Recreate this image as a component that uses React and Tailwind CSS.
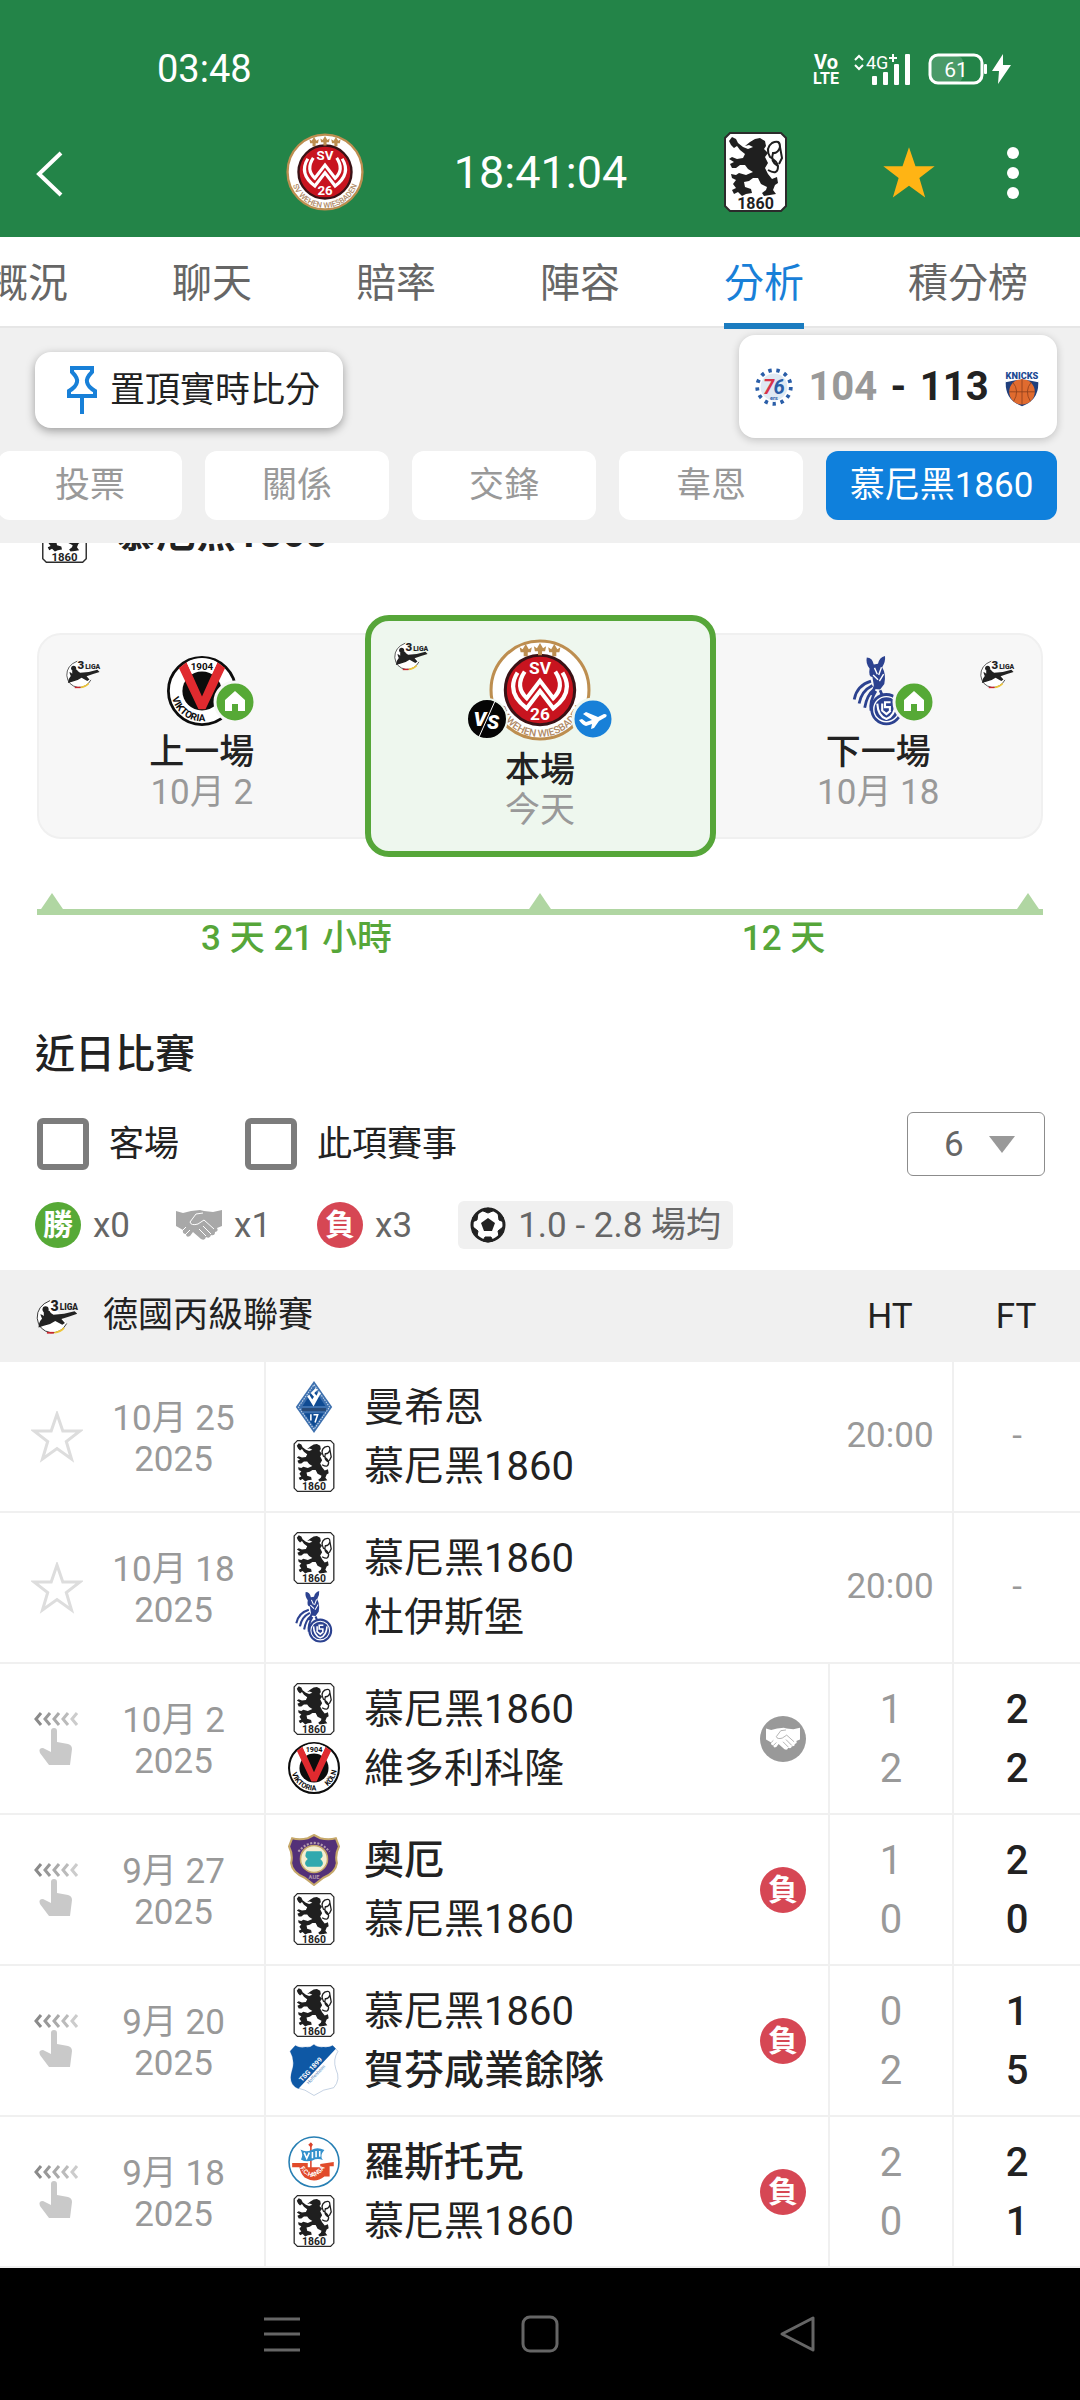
import React, { useId, useState } from 'react';

const LogoWehen = ({ className }) => {
  const arc = useId();
  return (
    <svg viewBox="0 0 100 100" className={className} role="img" aria-label="SV Wehen Wiesbaden">
      <circle cx="50" cy="50" r="48" fill="#fff" stroke="#bd8e50" strokeWidth="3" />
      <circle cx="50" cy="50" r="34" fill="#c8141f" stroke="#3a1216" strokeWidth="3" />
      <path d="M28 33Q16 52 37 68L50 51L63 68Q84 52 72 33" fill="none" stroke="#fff" strokeWidth="4" />
      <path d="M35 32Q25 47 37 58L50 41L63 58Q75 47 65 32" fill="none" stroke="#fff" strokeWidth="4" />
      <text x="50" y="34" textAnchor="middle" fontSize="17" fontWeight="700" fill="#fff">SV</text>
      <text x="50" y="79" textAnchor="middle" fontSize="17" fontWeight="700" fill="#fff">26</text>
      <g fill="#bd8e50">
        <path d="M50 4L53 9L56 7L55 12L52 12V16H48V12L45 12L44 7L47 9Z" />
        <path d="M36 5L39 10L42 8L41 13L38 13V17H34V13L31 13L30 8L33 10Z" />
        <path d="M64 5L67 10L70 8L69 13L66 13V17H62V13L59 13L58 8L61 10Z" />
      </g>
      <path id={arc} d="M6 52A44 44 0 0 0 94 52" fill="none" />
      <text fontSize="10" fontWeight="500" fill="#b08a66">
        <textPath href={`#${arc}`} startOffset="50%" textAnchor="middle">SV WEHEN WIESBADEN</textPath>
      </text>
    </svg>
  );
};

const Logo1860 = ({ className }) => (
  <svg viewBox="0 0 63 80" className={className} role="img" aria-label="TSV 1860">
    <path d="M6 1H57L62 6V74L57 79H6L1 74V6Z" fill="#fff" stroke="#2b2b2b" strokeWidth="2" />
    <path
      d="M26 10L31 7L36 6L41 9L42 14L40 17L44 21L41 25L44 31L41 36L44 42L48 47L53 45L54 51L51 53L49 58L52 62L46 63L40 64L38 61L42 58L43 55L37 52L34 46L29 46L25 49L20 50L21 55L27 57L28 61L22 62L18 64L14 60L10 62L8 58L12 56L9 52L12 48L8 46L7 42L12 43L15 41L22 43L29 40L24 37L21 33L16 33L12 36L8 36L6 32L10 30L5 27L8 25L13 27L19 26L21 22L16 18L13 14L10 16L7 13L5 9L8 5L12 7L14 11L19 15L24 17L29 15L25 13L21 14Z"
      fill="#1f1f1f"
    />
    <path d="M44 38Q54 44 54 34Q53 29 46 25Q41 16 48 11Q56 7 56 15Q54 22 48 21M54 34Q46 30 49 21M56 15L58 26L55 32" fill="none" stroke="#1f1f1f" strokeWidth="2" />
    <text x="31.500" y="77" textAnchor="middle" fontSize="16" fontWeight="700" fill="#1f1f1f">1860</text>
  </svg>
);

const LogoViktoria = ({ className }) => {
  const arc = useId();
  return (
    <svg viewBox="0 0 100 100" className={className} role="img" aria-label="Viktoria Köln">
      <circle cx="50" cy="50" r="48" fill="#fff" stroke="#0c0c0c" strokeWidth="4" />
      <circle cx="50" cy="50" r="28" fill="#0c0c0c" />
      <path d="M17 17L28 9L50 58L72 9L83 17L55 76H45Z" fill="#e02a2f" />
      <path d="M28 9Q50 -3 72 9L65 24Q50 18 35 24Z" fill="#fff" />
      <text x="50" y="20" textAnchor="middle" fontSize="14" fontWeight="700" fill="#0c0c0c">1904</text>
      <path id={arc} d="M7 40A44 44 0 1 0 93 40" fill="none" />
      <text fontSize="14" fontWeight="700" fill="#0c0c0c">
        <textPath href={`#${arc}`} startOffset="33%" textAnchor="middle">VIKTORIA</textPath>
      </text>
      <text fontSize="14" fontWeight="700" fill="#0c0c0c">
        <textPath href={`#${arc}`} startOffset="79%" textAnchor="middle">KÖLN</textPath>
      </text>
    </svg>
  );
};

const LogoDuisburg = ({ className }) => (
  <svg viewBox="0 0 72 100" className={className} role="img" aria-label="MSV Duisburg">
    <path d="M20 2Q28 2 30 12L36 11Q38 2 46 0Q47 8 42 16Q48 26 45 40L39 48L31 47L28 30Q22 30 24 18Q18 10 20 2Z" fill="#2c4290" />
    <path d="M31 17L35 26M41 16L37 27M29 27L36 34M44 26L38 36" stroke="#fff" strokeWidth="2" />
    <path d="M26 36Q6 42 2 62M28 42Q12 50 9 68M30 48Q20 56 17 74M33 50Q24 64 26 78M39 49L42 56M33 40L27 56" fill="none" stroke="#2c4290" strokeWidth="4" />
    <circle cx="48" cy="76" r="23" fill="#2c4290" />
    <circle cx="48" cy="76" r="18" fill="none" stroke="#fff" strokeWidth="2" />
    <path d="M35 68Q36 86 48 90Q60 86 61 68M42 68V78L48 83L54 78M54 66H46V73H53V78" fill="none" stroke="#fff" strokeWidth="3" />
  </svg>
);

const LogoMannheim = ({ className }) => (
  <svg viewBox="0 0 70 100" className={className} role="img" aria-label="Waldhof Mannheim">
    <path d="M35 0L70 50L35 100L0 50Z" fill="#3d70ae" />
    <path d="M35 7L65 50L35 93L5 50Z" fill="none" stroke="#c8d8ec" strokeWidth="2" strokeDasharray="3 2" />
    <path d="M35 15L57 48H13Z" fill="#0f4b93" />
    <path d="M12 52H58V58H12Z" fill="#274a78" />
    <path d="M24 28L34 44L46 22M40 15L32 23L38 30L33 38" fill="none" stroke="#fff" strokeWidth="5" />
    <path d="M16 62H54L35 88Z" fill="#0f4b93" />
    <path d="M29 64V76M34 65H42L37 80" fill="none" stroke="#fff" strokeWidth="3" />
  </svg>
);

const LogoAue = ({ className }) => (
  <svg viewBox="0 0 100 100" className={className} role="img" aria-label="Erzgebirge Aue">
    <path d="M50 2L62 8Q78 12 92 8L98 24Q90 40 94 56Q92 74 68 84L50 98L32 84Q8 74 6 56Q10 40 2 24L8 8Q22 12 38 8Z" fill="#533078" stroke="#c6a86a" strokeWidth="4" />
    <path d="M20 34Q50 0 80 34" fill="none" stroke="#b49cae" strokeWidth="4" strokeDasharray="4 3" />
    <circle cx="50" cy="48" r="26" fill="#f4eed0" stroke="#c6a86a" strokeWidth="3" />
    <path d="M36 33H64Q70 42 62 48Q72 56 63 63H37Q28 56 38 48Q30 42 36 33Z" fill="#31a9ae" />
    <text x="50" y="87" textAnchor="middle" fontSize="11" fontWeight="700" fill="#b49cae">AUE</text>
  </svg>
);

const LogoHoffenheim = ({ className }) => (
  <svg viewBox="0 0 96 100" className={className} role="img" aria-label="TSG Hoffenheim">
    <path d="M48 1Q54 7 66 6Q78 7 84 3L94 14Q84 30 90 48Q100 68 86 84Q66 86 48 99Q30 86 14 84Q-2 76 6 50Q12 32 2 14L12 3Q20 8 32 6Q42 7 48 1Z" fill="#fff" stroke="#8fa9c8" strokeWidth="1" />
    <path d="M48 1Q54 7 66 6Q78 7 84 3L90 9L18 86Q-3 78 6 50Q12 32 2 14L12 3Q20 8 32 6Q42 7 48 1Z" fill="#0e58a5" />
    <text transform="translate(25 73) rotate(-47)" fontSize="13" fontWeight="700" fill="#fff">TSG 1899</text>
    <text transform="translate(38 78) rotate(-47)" fontSize="9" fill="#4d7fb8">Hoffenheim</text>
  </svg>
);

const LogoRostock = ({ className }) => {
  const arc = useId();
  return (
    <svg viewBox="0 0 100 100" className={className} role="img" aria-label="Hansa Rostock">
      <circle cx="50" cy="50" r="48" fill="#fff" stroke="#277fb4" strokeWidth="3" />
      <path d="M44 14V62" stroke="#d9432c" strokeWidth="3" />
      <path d="M44 12L48 17L44 22L39 17Z" fill="#d9432c" />
      <path d="M24 26Q34 32 45 27Q56 20 70 27Q60 38 67 46Q56 42 47 47Q34 51 25 45Q30 36 24 26Z" fill="#3391cc" />
      <path d="M31 32L36 43L41 32M47 31V43M54 29V41M61 29V40" fill="none" stroke="#fff" strokeWidth="3" />
      <path d="M8 52H38V60H62V54L88 50V58H80V78H70Q52 92 32 80Q24 72 22 60H8Z" fill="#e14b2b" />
      <path id={arc} d="M24 63Q46 94 70 62" fill="none" />
      <text fontSize="12" fontWeight="700" fill="#fff">
        <textPath href={`#${arc}`} startOffset="50%" textAnchor="middle">F.C.HANSA</textPath>
      </text>
    </svg>
  );
};

const Logo76ers = ({ className }) => (
  <svg viewBox="0 0 100 100" className={className} role="img" aria-label="76ers">
    <circle cx="50" cy="50" r="49" fill="#fff" />
    <circle cx="50" cy="50" r="32" fill="#dfe9f3" />
    <circle cx="50" cy="50" r="40" fill="none" stroke="#2a5ea8" strokeWidth="9" strokeDasharray="8 11.300" />
    <text x="37" y="66" textAnchor="middle" fontSize="48" fontStyle="italic" fontWeight="700" fill="#d8344a">7</text>
    <text x="62" y="66" textAnchor="middle" fontSize="48" fontStyle="italic" fontWeight="700" fill="#2a5ea8">6</text>
    <text x="50" y="80" textAnchor="middle" fontSize="13" fontWeight="700" fill="#2a5ea8">ers</text>
  </svg>
);

const LogoKnicks = ({ className }) => (
  <svg viewBox="0 0 94 100" className={className} role="img" aria-label="Knicks">
    <path d="M8 24L86 24Q96 80 47 98Q-2 80 8 24Z" fill="#1f3f7c" />
    <circle cx="47" cy="62" r="32" fill="#e06b2f" />
    <path d="M47 30V94M15 62H79M24 38Q42 60 26 86M70 38Q52 60 68 86" fill="none" stroke="#8a3d1c" strokeWidth="2" />
    <path d="M1 8L47 14L93 8L88 38L47 30L6 38Z" fill="#fff" />
    <text x="47" y="31" textAnchor="middle" fontSize="23" fontWeight="900" fill="#1d4a93">KNICKS</text>
  </svg>
);

const LogoLiga = ({ className }) => (
  <svg viewBox="0 0 100 84" className={className} role="img" aria-label="3. Liga">
    <path d="M34 6Q4 18 5 46Q8 74 36 79Q60 80 72 58" fill="#fff" stroke="#222" strokeWidth="2" />
    <path d="M20 32Q32 24 36 34L42 38L66 36L90 30L96 36L78 42L60 48L68 57L62 61L46 52Q34 61 20 63L8 67Q8 55 16 47L12 37Q16 37 20 41Z" fill="#222" />
    <circle cx="24" cy="26" r="7" fill="#222" />
    <text x="35" y="29" fontSize="32" fontWeight="900" fill="#222">3</text>
    <text x="56" y="28" fontSize="19" fontWeight="900" fill="#222">LIGA</text>
    <path d="M27 79H43" stroke="#c8252c" strokeWidth="4" />
    <path d="M44 79Q58 77 66 68" fill="none" stroke="#edc53a" strokeWidth="4" />
  </svg>
);

const Handshake = ({ className, line = '#fff' }) => (
  <svg viewBox="0 0 46 32" className={className} fill="currentColor" aria-hidden="true">
    <path d="M0 2L7 4L15 2L24 1L28 2L37 3L46 1V17L41 19Q43 22 39 23Q39 27 35 26Q34 30 30 28Q29 32 25 30L17 23L14 27Q10 29 10 25Q6 25 7 21L0 17Z" />
    <path d="M38 20L28 11L22 15Q15 17 14 13L20 5L27 4M35 25L27 17M30 27L23 20M7 21L10 18M10 25L14 21" fill="none" stroke={line} strokeWidth="1" />
  </svg>
);

const Football = ({ className }) => (
  <svg viewBox="0 0 40 40" className={className} aria-hidden="true">
    <circle cx="20" cy="20" r="16" fill="#fff" stroke="#222" strokeWidth="3" />
    <path d="M20 13L27 18L24 26H16L13 18Z" fill="#222" />
    <path d="M13 5L20 8L27 5L20 3ZM4 17L9 15L10 8L5 12ZM36 17L31 15L30 8L35 12ZM9 31L10 26L5 22L5 28ZM31 31L30 26L35 22L35 28ZM15 36L17 32H23L25 36L20 37Z" fill="#222" stroke="#222" />
  </svg>
);

const Star = ({ className, ...rest }) => (
  <svg viewBox="0 0 52 52" className={className} aria-hidden="true" {...rest}>
    <path d="M26 3L31.800 20H49L35.300 30.500L40.500 48L26 37.500L11.500 48L16.700 30.500L3 20H20.200Z" strokeWidth="3" />
  </svg>
);

const SwipeHint = ({ className }) => (
  <svg viewBox="0 0 52 56" className={className} fill="none" aria-hidden="true">
    <path d="M10 2L5 8L10 14" stroke="#8a8a8a" strokeWidth="3" />
    <path d="M19 2L14 8L19 14" stroke="#999" strokeWidth="3" />
    <path d="M28 2L23 8L28 14" stroke="#aaa" strokeWidth="3" />
    <path d="M37 2L32 8L37 14" stroke="#bbb" strokeWidth="3" />
    <path d="M46 2L41 8L46 14" stroke="#ccc" strokeWidth="3" />
    <path d="M20 20Q20 17 23 17Q26 17 26 20V31L37 33Q41 34 41 38L39 54H18L9 42Q7 37 12 37L20 41Z" fill="#c9c9c9" />
  </svg>
);

const HomeBadge = () => (
  <svg viewBox="0 0 44 44" className="absolute -right-5 bottom-0.5 size-11" aria-label="主場">
    <circle cx="22" cy="22" r="20" fill="#56a936" stroke="#f7f7f7" strokeWidth="3" />
    <path d="M22 11L32 20V31H25V24H19V31H12V20Z" fill="#fff" />
  </svg>
);

const AwayBadge = () => (
  <svg viewBox="0 0 44 44" className="absolute -right-6 bottom-0 size-11" aria-label="作客">
    <circle cx="22" cy="22" r="20" fill="#1880d8" stroke="#eef7ee" strokeWidth="3" />
    <path d="M8 23L11 22L15 25L21 23L12 17L15 15L27 20L33 17Q37 17 35 20L28 24L23 31L20 32L21 27L15 29Q11 28 8 23Z" fill="#fff" />
  </svg>
);

const VsBadge = () => (
  <svg viewBox="0 0 44 44" className="absolute -left-6 bottom-0 size-11" aria-label="對">
    <circle cx="22" cy="22" r="20" fill="#050505" stroke="#eef7ee" strokeWidth="2" />
    <text x="15" y="29" textAnchor="middle" fontSize="20" fontWeight="900" fontStyle="italic" fill="#fff">V</text>
    <text x="28" y="32" textAnchor="middle" fontSize="20" fontWeight="900" fontStyle="italic" fill="#fff">S</text>
    <path d="M30 4L14 40" stroke="#fff" strokeWidth="1" />
  </svg>
);

const ResultBadge = ({ result }) => {
  if (result === 'draw') {
    return (
      <span className="flex size-[46px] items-center justify-center rounded-full bg-[#999999] text-white">
        <Handshake className="w-[34px]" line="#999999" />
      </span>
    );
  }
  return (
    <span className="flex size-[46px] items-center justify-center rounded-full bg-[#d64754] text-[30px] leading-none font-bold text-white">
      負
    </span>
  );
};

const tabs = ['概況', '聊天', '賠率', '陣容', '分析', '積分榜'];
const sections = ['投票', '關係', '交鋒', '韋恩'];

const MUNICH = { name: '慕尼黑1860', Logo: Logo1860 };

const matches = [
  { day: '10月 25', home: { name: '曼希恩', Logo: LogoMannheim }, away: MUNICH, time: '20:00' },
  { day: '10月 18', home: MUNICH, away: { name: '杜伊斯堡', Logo: LogoDuisburg }, time: '20:00' },
  { day: '10月 2', home: MUNICH, away: { name: '維多利科隆', Logo: LogoViktoria }, ht: [1, 2], ft: [2, 2], result: 'draw' },
  { day: '9月 27', home: { name: '奧厄', Logo: LogoAue, won: true }, away: MUNICH, ht: [1, 0], ft: [2, 0], result: 'loss' },
  { day: '9月 20', home: MUNICH, away: { name: '賀芬咸業餘隊', Logo: LogoHoffenheim, won: true }, ht: [0, 2], ft: [1, 5], result: 'loss' },
  { day: '9月 18', home: { name: '羅斯托克', Logo: LogoRostock, won: true }, away: MUNICH, ht: [2, 0], ft: [2, 1], result: 'loss' },
];

const StatusBar = () => (
  <div className="flex h-[136px] items-center justify-between pt-0.5 pr-[68px] pl-[157px]">
    <span className="text-[38px] leading-none">03:48</span>
    <div className="flex items-center gap-[13px]">
      <svg viewBox="0 0 28 36" className="h-9 w-7" fill="#fff" aria-label="VoLTE">
        <text x="14" y="18" textAnchor="middle" fontSize="20" fontWeight="700">Vo</text>
        <text x="14" y="33" textAnchor="middle" fontSize="16" fontWeight="700">LTE</text>
      </svg>
      <svg viewBox="0 0 58 32" className="h-8 w-[58px]" fill="#fff" aria-label="4G+">
        <path d="M2 7L6 3L10 7M2 12L6 16L10 12" fill="none" stroke="#fff" strokeWidth="2" />
        <text x="13" y="16" fontSize="18">4G</text>
        <path d="M36 5H44M40 1V9" stroke="#fff" strokeWidth="2" />
        <rect x="19" y="23" width="5" height="9" rx="1" />
        <rect x="30" y="19" width="5" height="13" rx="1" />
        <rect x="41" y="11" width="5" height="21" rx="1" />
        <rect x="52" y="1" width="5" height="31" rx="1" />
      </svg>
      <svg viewBox="0 0 84 32" className="ml-1 h-8 w-[84px]" fill="#fff" aria-label="61%">
        <rect x="3" y="3" width="32" height="26" rx="6" fill="#4a9a68" />
        <rect x="2" y="2" width="52" height="28" rx="8" fill="none" stroke="#fff" strokeWidth="3" />
        <rect x="56" y="11" width="3" height="10" rx="1" />
        <text x="28" y="24" textAnchor="middle" fontSize="21">61</text>
        <path d="M75 1L64 18H71L70 31L83 12H75Z" />
      </svg>
    </div>
  </div>
);

const Header = () => (
  <header className="bg-[#238448] text-white">
    <StatusBar />
    <div className="flex h-[101px] items-start pr-[42px] pl-[34px]">
      <div className="flex h-[76px] flex-1 items-center">
        <button type="button" aria-label="返回">
          <svg viewBox="0 0 34 46" className="h-[46px] w-[34px]" fill="none" stroke="#fff" strokeWidth="4">
            <path d="M27 2L5 23L27 44" />
          </svg>
        </button>
      </div>
      <div className="-mt-1 flex h-20 items-center">
        <LogoWehen className="size-[78px]" />
        <span className="w-[360px] pr-1.5 text-center text-[45px] leading-none">18:41:04</span>
        <Logo1860 className="h-20 w-[63px]" />
      </div>
      <div className="flex h-[74px] flex-1 items-center justify-end gap-[50px]">
        <button type="button" aria-label="收藏">
          <Star className="size-[58px]" fill="#ffb414" />
        </button>
        <button type="button" aria-label="更多" className="flex w-[50px] flex-col items-center gap-2">
          <span className="size-3 rounded-full bg-white" />
          <span className="size-3 rounded-full bg-white" />
          <span className="size-3 rounded-full bg-white" />
        </button>
      </div>
    </div>
  </header>
);

const TabBar = () => (
  <nav className="flex h-[91px] justify-end gap-[104px] overflow-x-clip border-b-2 border-[#e6e6e6] bg-white pr-[52px] text-[40px] leading-[94px] whitespace-nowrap text-[#666666]">
    {tabs.map((tab) => (
      <a
        key={tab}
        href={`#${tab}`}
        className={tab === '分析' ? 'relative z-10 h-[92px] shrink-0 border-b-[6px] border-[#1b7cc0] text-[#1880d8]' : 'shrink-0'}
      >
        {tab}
      </a>
    ))}
  </nav>
);

const Toolbar = () => (
  <div className="overflow-x-clip bg-[#f0f0f0] pb-[23px]">
    <div className="flex h-[123px] items-start justify-between pr-[23px] pl-[35px]">
      <button type="button" className="mt-6 flex h-[76px] items-center gap-[13px] rounded-2xl bg-white pr-[23px] pl-8 text-[35px] leading-none text-[#222222] shadow-[0_3px_10px_rgba(0,0,0,0.35)]">
        <svg viewBox="0 0 30 50" className="h-[50px] w-[30px]" fill="none" stroke="#1880d8" strokeWidth="4" aria-hidden="true">
          <path d="M5 3H25V7Q19 13 20 17Q21 22 28 26V31H2V26Q9 22 10 17Q11 13 5 7ZM15 31V49" />
        </svg>
        置頂實時比分
      </button>
      <a href="#live" className="mt-[7px] flex h-[103px] w-[318px] items-center justify-between rounded-2xl bg-white pr-[15px] pl-[14px] text-[40px] leading-none font-bold shadow-[0_2px_8px_rgba(0,0,0,0.2)]">
        <Logo76ers className="size-[42px]" />
        <span className="text-[#999999]">104</span>
        <span className="text-[#222222]">-</span>
        <span className="text-[#222222]">113</span>
        <LogoKnicks className="size-10" />
      </a>
    </div>
    <div className="flex justify-end gap-[23px] pr-[23px] text-[35px] leading-[69px] text-[#999999]">
      {sections.map((s) => (
        <button key={s} type="button" className="w-[184px] shrink-0 rounded-xl bg-white">
          {s}
        </button>
      ))}
      <button type="button" className="w-[231px] shrink-0 rounded-xl bg-[#0f80dc] text-white">
        慕尼黑1860
      </button>
    </div>
  </div>
);

const SideMatch = ({ title, date, children, liga }) => (
  <div className="relative flex flex-1 flex-col items-center pt-[21px]">
    <LogoLiga className={liga} />
    <div className="relative">
      {children}
      <HomeBadge />
    </div>
    <p className="mt-[7px] text-[35px] leading-[40px] font-medium text-[#222222]">{title}</p>
    <p className="text-[35px] leading-[40px] text-[#999999]">{date}</p>
  </div>
);

const Peak = () => (
  <svg viewBox="0 0 30 22" className="-mb-1.5 h-[22px] w-[30px]" fill="#b0d6a2" aria-hidden="true">
    <path d="M15 0L30 22H0Z" />
  </svg>
);

const Schedule = () => (
  <section>
    <div className="flex h-[20px] items-end gap-[29px] overflow-hidden pl-[42px]">
      <Logo1860 className="h-[57px] w-[45px] shrink-0" />
      <h2 className="text-[40px] leading-[58px] font-bold text-[#222222]">慕尼黑1860</h2>
    </div>
    <div className="mx-[37px] mt-[70px] flex h-[206px] items-center rounded-3xl border-2 border-[#f0f0f0] bg-[#f7f7f7]">
      <div className="flex h-full flex-1">
        <SideMatch title="上一場" date="10月 2" liga="absolute top-6 left-[26px] w-9">
          <LogoViktoria className="size-[70px]" />
        </SideMatch>
      </div>
      <div className="relative flex h-[242px] w-[351px] shrink-0 flex-col items-center rounded-3xl border-[6px] border-[#56a639] bg-[#eef7ee] pt-[18px]">
        <LogoLiga className="absolute top-5 left-[22px] w-9" />
        <div className="relative">
          <LogoWehen className="size-[102px]" />
          <VsBadge />
          <AwayBadge />
        </div>
        <p className="mt-[10px] text-[35px] leading-[40px] font-medium text-[#222222]">本場</p>
        <p className="text-[35px] leading-[40px] text-[#999999]">今天</p>
      </div>
      <div className="flex h-full flex-1">
        <SideMatch title="下一場" date="10月 18" liga="absolute top-6 right-[26px] w-9">
          <LogoDuisburg className="h-[70px] w-[76px]" />
        </SideMatch>
      </div>
    </div>
    <div className="mx-[37px] mt-[54px]">
      <div className="flex items-end justify-between border-b-[6px] border-[#b0d6a2]">
        <Peak />
        <Peak />
        <Peak />
      </div>
      <div className="flex px-4 text-center text-[35px] leading-[48px] font-medium text-[#56a639]">
        <span className="flex-1">3 天 21 小時</span>
        <span className="flex-1">12 天</span>
      </div>
    </div>
  </section>
);

const Filters = () => {
  const [awayOnly, setAwayOnly] = useState(false);
  const [sameLeague, setSameLeague] = useState(false);
  const [count, setCount] = useState('6');

  return (
    <section className="px-[35px] pt-16">
      <h2 className="text-[40px] leading-[56px] font-medium text-[#222222]">近日比賽</h2>
      <div className="mt-[29px] flex h-16 items-center text-[35px] leading-none text-[#222222]">
        <label className="flex items-center gap-5">
          <input
            type="checkbox"
            checked={awayOnly}
            onChange={(e) => setAwayOnly(e.target.checked)}
            className="ml-0.5 size-[52px] appearance-none rounded-md border-[6px] border-[#7c7c7c] bg-white checked:bg-[#7c7c7c]"
          />
          客場
        </label>
        <label className="ml-[66px] flex items-center gap-5">
          <input
            type="checkbox"
            checked={sameLeague}
            onChange={(e) => setSameLeague(e.target.checked)}
            className="size-[52px] appearance-none rounded-md border-[6px] border-[#7c7c7c] bg-white checked:bg-[#7c7c7c]"
          />
          此項賽事
        </label>
        <div className="relative ml-auto">
          <select
            aria-label="場數"
            value={count}
            onChange={(e) => setCount(e.target.value)}
            className="block h-16 w-[138px] appearance-none rounded-md border border-[#8c8c8c] bg-white pl-9 text-[35px] text-[#666666]"
          >
            <option value="6">6</option>
            <option value="10">10</option>
            <option value="20">20</option>
          </select>
          <svg viewBox="0 0 26 17" className="pointer-events-none absolute top-6 right-[30px] w-[26px]" fill="#999999" aria-hidden="true">
            <path d="M0 0H26L13 17Z" />
          </svg>
        </div>
      </div>
      <div className="mt-[25px] flex h-12 items-center text-[35px] leading-none text-[#666666]">
        <span className="flex size-[46px] items-center justify-center rounded-full bg-[#56a936] text-[30px] font-bold text-white">勝</span>
        <span className="ml-3">x0</span>
        <Handshake className="ml-[46px] w-[46px] text-[#a8a8a8]" />
        <span className="ml-3">x1</span>
        <span className="ml-[46px] flex size-[46px] items-center justify-center rounded-full bg-[#d64754] text-[30px] font-bold text-white">負</span>
        <span className="ml-3">x3</span>
        <span className="ml-[46px] flex h-12 items-center gap-[10px] rounded-md bg-[#f0f0f0] pr-3 pl-2.5">
          <Football className="size-10" />
          1.0 - 2.8 場均
        </span>
      </div>
    </section>
  );
};

const TeamLine = ({ team }) => {
  const { Logo } = team;
  return (
    <div className="flex items-center gap-6">
      <Logo className="h-[52px] w-[52px]" />
      <span className={team.won ? 'font-medium' : ''}>{team.name}</span>
    </div>
  );
};

const MatchRow = ({ match }) => {
  const played = !!match.ft;
  return (
    <tr className="h-[151px]">
      <td className="border-r-2 border-b-2 border-[#f0f0f0] p-0">
        <div className="flex items-center pl-[31px] text-[#999999]">
          {played ? (
            <SwipeHint className="w-[52px]" />
          ) : (
            <button type="button" aria-label="收藏">
              <Star className="w-[52px]" fill="none" stroke="#dddddd" />
            </button>
          )}
          <div className="flex-1 pt-1 text-center text-[35px] leading-[41px]">
            {match.day}
            <br />
            2025
          </div>
        </div>
      </td>
      <td className="border-b-2 border-[#f0f0f0] p-0">
        <div className="flex items-center justify-between px-[22px]">
          <div className="text-[40px] leading-[59px] text-[#222222]">
            <TeamLine team={match.home} />
            <TeamLine team={match.away} />
          </div>
          {played && <ResultBadge result={match.result} />}
        </div>
      </td>
      {played ? (
        <td className="border-b-2 border-l-2 border-[#f0f0f0] p-0 text-center text-[40px] leading-[59px] text-[#999999]">
          {match.ht[0]}
          <br />
          {match.ht[1]}
        </td>
      ) : (
        <td className="border-b-2 border-[#f0f0f0] p-0 text-center text-[35px] text-[#999999]">{match.time}</td>
      )}
      {played ? (
        <td className="border-b-2 border-l-2 border-[#f0f0f0] p-0 text-center text-[40px] leading-[59px] font-medium text-[#222222]">
          {match.ft[0]}
          <br />
          {match.ft[1]}
        </td>
      ) : (
        <td className="border-b-2 border-l-2 border-[#f0f0f0] p-0 text-center text-[35px] text-[#999999]">-</td>
      )}
    </tr>
  );
};

const MatchTable = () => (
  <table className="mt-[21px] w-full table-fixed border-separate border-spacing-0">
    <colgroup>
      <col className="w-[266px]" />
      <col />
      <col className="w-[124px]" />
      <col className="w-[128px]" />
    </colgroup>
    <thead>
      <tr className="h-[92px] bg-[#f0f0f0] text-[35px] leading-none text-[#222222]">
        <th colSpan={2} className="p-0 text-left font-normal">
          <div className="flex items-center gap-6 pl-[35px]">
            <LogoLiga className="w-11" />
            德國丙級聯賽
          </div>
        </th>
        <th className="p-0 font-normal">HT</th>
        <th className="p-0 font-normal">FT</th>
      </tr>
    </thead>
    <tbody>
      {matches.map((match) => (
        <MatchRow key={match.day} match={match} />
      ))}
    </tbody>
  </table>
);

const SystemNav = () => (
  <footer className="flex flex-1 items-center justify-center gap-[216px] bg-black py-[44px]">
    <button type="button" aria-label="選單">
      <svg viewBox="0 0 42 42" className="size-[42px]" stroke="#666" strokeWidth="3"><path d="M3 6H39M3 21H39M3 37H39" /></svg>
    </button>
    <button type="button" aria-label="主頁">
      <svg viewBox="0 0 42 42" className="size-[42px]" fill="none" stroke="#666" strokeWidth="3"><rect x="4" y="4" width="34" height="34" rx="7" /></svg>
    </button>
    <button type="button" aria-label="返回上頁">
      <svg viewBox="0 0 42 42" className="size-[42px]" fill="none" stroke="#666" strokeWidth="3" strokeLinejoin="round"><path d="M36 5V37L5 21Z" /></svg>
    </button>
  </footer>
);

const App = () => (
  <div className="flex min-h-screen flex-col overflow-x-clip bg-white font-['Roboto','Noto_Sans_CJK_TC',sans-serif]">
    <Header />
    <TabBar />
    <Toolbar />
    <Schedule />
    <Filters />
    <MatchTable />
    <SystemNav />
  </div>
);

export default App;
